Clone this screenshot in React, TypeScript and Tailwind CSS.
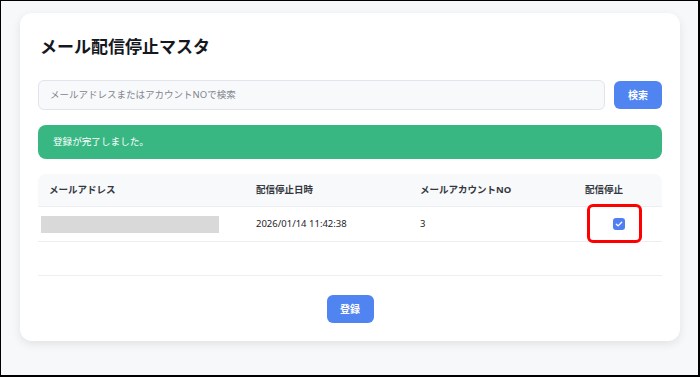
import React from "react";

const font = { fontFamily: '"Noto Sans", "Noto Sans CJK JP", sans-serif' };

function CheckIcon() {
  return (
    <span className="flex h-[12px] w-[12px] items-center justify-center rounded-[3px] bg-[#4f7ff0]">
      <svg width="8" height="8" viewBox="0 0 8 8" fill="none">
        <path d="M1.3 4.2 3.1 5.9 6.7 2.2" stroke="white" strokeWidth="1.3" strokeLinecap="round" strokeLinejoin="round" />
      </svg>
    </span>
  );
}

export default function App() {
  return (
    <div
      style={font}
      className="h-[377px] w-[700px] border-t border-l border-r-2 border-b-2 border-black bg-[#f7f8fa] pl-[19px] pt-[12px]"
    >
      <div className="flex h-[328px] w-[660px] flex-col rounded-xl bg-white px-[18px] pt-[22px] pb-[18px] shadow-[0_3px_10px_rgba(0,0,0,0.09)]">
        <h1 className="pl-[2px] text-[17px] leading-[24px] font-bold text-[#15181e]">メール配信停止マスタ</h1>

        <div className="mt-[21px] flex items-center gap-[9px]">
          <div className="flex h-[30px] flex-1 items-center rounded-md border border-[#e1e4ea] bg-[#f8f9fb] px-[11px] text-[9.5px] text-[#80858e]">
            メールアドレスまたはアカウントNOで検索
          </div>
          <button className="h-[28px] w-[48px] rounded-md bg-[#5084f1] text-[10px] font-bold text-white">検索</button>
        </div>

        <div className="mt-[15px] flex h-[34px] items-center rounded-lg bg-[#38b783] px-[15px] text-[9.6px] text-white">
          登録が完了しました。
        </div>

        <div className="mt-[15px] h-[102px] border-b border-[#eceef2]">
          <div className="grid h-[33px] grid-cols-[206px_164px_165px_1fr] items-center rounded-t-lg border-b border-[#eceef2] bg-[#f8f9fb] text-[9.5px] font-bold text-[#343840]">
            <div className="px-[11px]">メールアドレス</div>
            <div className="px-[12px]">配信停止日時</div>
            <div className="px-[12px]">メールアカウントNO</div>
            <div className="px-[12px]">配信停止</div>
          </div>
          <div className="grid h-[35px] grid-cols-[206px_164px_165px_1fr] items-center border-b border-[#eceef2] text-[9.5px] text-[#1f232a]">
            <div className="pl-[3px]">
              <div className="h-[17px] w-[178px] bg-[#d9d9d9]" />
            </div>
            <div className="px-[12px]">2026/01/14 11:42:38</div>
            <div className="px-[12px]">3</div>
            <div className="relative flex h-full items-center justify-center pl-[2px]">
              <CheckIcon />
              <div className="absolute top-[-3px] left-[14px] h-[39px] w-[55px] rounded-md border-[3px] border-[#ff0000]" />
            </div>
          </div>
        </div>

        <div className="mt-auto flex justify-center">
          <button className="h-[28px] w-[47px] rounded-md bg-[#5084f1] text-[10px] font-bold text-white">登録</button>
        </div>
      </div>
    </div>
  );
}
